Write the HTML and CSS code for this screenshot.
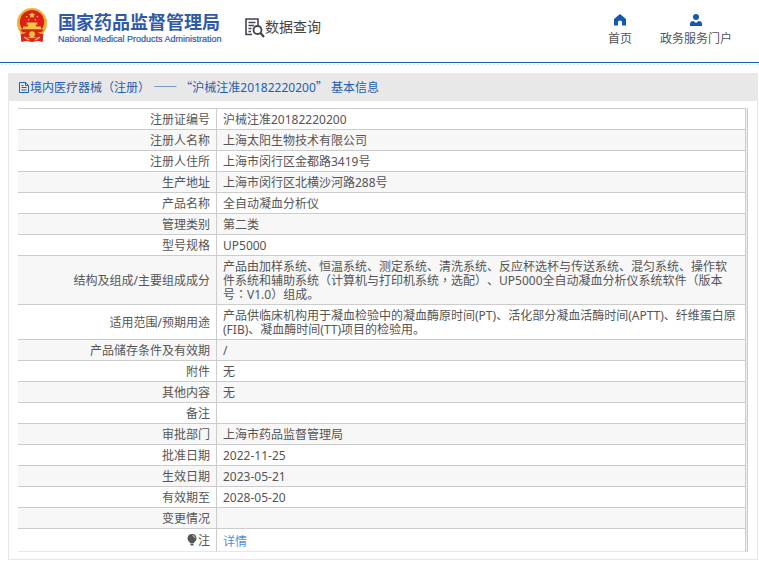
FILE: index.html
```html
<!DOCTYPE html>
<html lang="zh-CN">
<head>
<meta charset="utf-8">
<title>国家药品监督管理局 数据查询</title>
<link rel="stylesheet" href="styles.css">
</head>
<body>
<header class="site-header">
  <div class="brand">
    <svg class="emblem" viewBox="0 0 32 36" aria-hidden="true">
      <path d="M4 22L5 35L10 34L16 35L22 34L27 35L28 22Z" fill="#d8261c"/>
      <circle cx="16" cy="15.500" r="15.500" fill="#e9b53c"/>
      <circle cx="16" cy="14.500" r="12.500" fill="#dc2018"/>
      <path d="M16 4l.9 2.200 2.400.2-1.800 1.500.6 2.300-2.100-1.200-2.100 1.200.6-2.300-1.800-1.500 2.400-.2z" fill="#f5d04c"/>
      <g fill="#f5d04c"><circle cx="10.500" cy="9" r=".8"/><circle cx="12.500" cy="12" r=".8"/><circle cx="19.500" cy="12" r=".8"/><circle cx="21.500" cy="9" r=".8"/></g>
      <path d="M11 15h10l1 2h-2v2h5l1 3H6l1-3h5v-2h-2z" fill="#f0c548"/>
      <path d="M4 22h24l-2 3H6z" fill="#dc2018"/>
      <path d="M5 27L12 25L16 28L20 25L27 27L23 31L16 29L9 31Z" fill="#d8261c"/>
      <circle cx="16" cy="27" r="3" fill="#efbf45"/>
      <path d="M8 30L13 33M24 30L19 33" stroke="#efbf45" stroke-width="1.500"/>
    </svg>
    <div class="brand-text">
      <span class="brand-name">国家药品监督管理局</span>
      <span class="brand-en">National Medical Products Administration</span>
    </div>
  </div>
  <div class="section-name">
    <svg class="search-icon" viewBox="0 0 20 20" aria-hidden="true" fill="none" stroke="#444250">
      <path d="M7 16.500H1V1H13V7" stroke-width="1.600"/>
      <path d="M3.500 4.500H10.500M3.500 7.500H9M3.500 10.500H6.500M3.500 13.500H6" stroke-width="1.300"/>
      <circle cx="12.500" cy="12" r="4" stroke-width="1.800"/>
      <path d="M15.500 15L19 19" stroke-width="2.200"/>
    </svg>
    <span>数据查询</span>
  </div>
  <nav class="top-nav">
    <a href="#home"><svg viewBox="0 0 12 12" aria-hidden="true"><path d="M6 0L12 5V11.500H8V8Q8 6.500 6 6.500T4 8V11.500H0V5Z"/></svg>首页</a>
    <a href="#portal"><svg viewBox="0 0 12 12" aria-hidden="true"><circle cx="6" cy="3" r="3"/><path d="M0 12V10Q0 7 3.500 7L6 9L8.500 7Q12 7 12 10V12Z"/></svg>政务服务门户</a>
  </nav>
</header>
<main class="panel">
  <h1 class="panel-title">
    <svg viewBox="0 0 10 11" aria-hidden="true" fill="none" stroke="#1d62b8"><path d="M.5.5H6.500L9.500 3.500V10.500H.5ZM6.500.5V3.500H9.500M2.500 3.500H4.500M2.500 5.500H7.500M2.500 8H7.500"/></svg>
    <span>境内医疗器械（注册） <span class="cjk">——</span> <span class="cjk">“</span>沪械注准20182220200<span class="cjk">”</span> 基本信息</span>
  </h1>
  <div class="table-frame">
    <table class="info">
      <tbody>
        <tr><th scope="row">注册证编号</th><td>沪械注准20182220200</td></tr>
        <tr><th scope="row">注册人名称</th><td>上海太阳生物技术有限公司</td></tr>
        <tr><th scope="row">注册人住所</th><td>上海市闵行区金都路3419号</td></tr>
        <tr><th scope="row">生产地址</th><td>上海市闵行区北横沙河路288号</td></tr>
        <tr><th scope="row">产品名称</th><td>全自动凝血分析仪</td></tr>
        <tr><th scope="row">管理类别</th><td>第二类</td></tr>
        <tr><th scope="row">型号规格</th><td>UP5000</td></tr>
        <tr><th scope="row">结构及组成/主要组成成分</th><td>产品由加样系统、恒温系统、测定系统、清洗系统、反应杯选杯与传送系统、混匀系统、操作软<br>件系统和辅助系统（计算机与打印机系统<span class="centered" lang="zh-TW">，</span>选配）、UP5000全自动凝血分析仪系统软件（版本<br>号<span class="centered" lang="zh-TW">：</span>V1.0）组成。</td></tr>
        <tr><th scope="row">适用范围/预期用途</th><td>产品供临床机构用于凝血检验中的凝血酶原时间(PT)、活化部分凝血活酶时间(APTT)、纤维蛋白原<br>(FIB)、凝血酶时间(TT)项目的检验用。</td></tr>
        <tr><th scope="row">产品储存条件及有效期</th><td>/</td></tr>
        <tr><th scope="row">附件</th><td>无</td></tr>
        <tr><th scope="row">其他内容</th><td>无</td></tr>
        <tr><th scope="row">备注</th><td></td></tr>
        <tr><th scope="row">审批部门</th><td>上海市药品监督管理局</td></tr>
        <tr><th scope="row">批准日期</th><td>2022-11-25</td></tr>
        <tr><th scope="row">生效日期</th><td>2023-05-21</td></tr>
        <tr><th scope="row">有效期至</th><td>2028-05-20</td></tr>
        <tr><th scope="row">变更情况</th><td></td></tr>
        <tr class="note"><th scope="row"><svg viewBox="0 0 10 12" aria-hidden="true"><path d="M5 0C8 0 9.500 2 9.500 4.500C9.500 7 7 8 6.500 9.500H3.500C3 8 .5 7 .5 4.500C.5 2 2 0 5 0ZM3.500 10H6.500V11.500H3.500Z" fill="#555"/><path d="M5.500 1.500Q7.500 2 8 4" fill="none" stroke="#ddd"/></svg>注</th><td><a href="#detail">详情</a></td></tr>
      </tbody>
    </table>
  </div>
</main>
</body>
</html>
```
FILE: styles.css
```css
* { box-sizing: border-box; }
body {
  margin: 0;
  background: #fff;
  color: #555;
  font: 12px/14px "Noto Sans", "Noto Sans CJK SC", sans-serif;
  text-spacing-trim: space-all;
}
a { text-decoration: none; }
.site-header {
  display: flex;
  align-items: flex-start;
  height: 66px;
  padding-left: 16px;
  background:
    radial-gradient(circle, #dceaf1 1px, transparent 1px) 0 63px / 4px 3px repeat-x,
    linear-gradient(#1f61a5, #1f61a5) 0 62px / 100% 1px no-repeat;
}
.brand { display: flex; gap: 10px; padding-top: 8px; }
.emblem { width: 32px; height: 35px; }
.brand-text { display: flex; flex-direction: column; width: 162px; color: #2f5aa8; white-space: nowrap; }
.brand-name { font: bold 18px/26px "Noto Sans CJK SC", sans-serif; }
.brand-en { font: 9px/10px "Liberation Sans", sans-serif; -webkit-text-stroke: 0.2px #2f5aa8; }
.section-name {
  display: flex;
  margin-left: 25px;
  padding-top: 16px;
  color: #444;
  font: 14px/20px "Noto Sans CJK SC", sans-serif;
}
.search-icon { width: 20px; height: 20px; margin-top: 2px; }
.top-nav { display: flex; gap: 28px; margin-left: auto; padding: 14px 27px 0 0; }
.top-nav a { display: flex; flex-direction: column; align-items: center; gap: 5px; color: #555; line-height: 16px; }
.top-nav svg { width: 12px; height: 12px; fill: #1558b0; }
.panel { margin: 7px 1px 0 8px; border: 1px solid #e6e6e6; }
.panel-title {
  display: flex;
  align-items: center;
  gap: 1px;
  margin: -1px -1px 0;
  height: 28px;
  padding: 1px 0 0 11px;
  background: #e8e8e8;
  color: #1d5fb0;
  font-size: 12px;
  font-weight: normal;
}
.panel-title svg { width: 10px; height: 11px; }
.cjk { font-family: "Noto Sans CJK SC", sans-serif; }
.centered { font-family: "Noto Sans CJK TC", sans-serif; line-height: 0; }
.table-frame { margin: 7px 9px; border-right: 1px solid #ccc; padding-right: 1px; background: #f0f0f0; }
.info { width: 100%; border-collapse: separate; border-spacing: 0; border-right: 1px solid #ccc; background: #fff; }
.info th, .info td { height: 21px; border-top: 1px solid #ccc; padding: 4px 5px 2px 6px; text-align: left; vertical-align: middle; }
.info th { width: 199px; padding-right: 6px; border-right: 1px solid #ccc; text-align: right; font-weight: normal; }
.info tr:nth-child(even) { background: #f7f7f7; }
.info .note th, .info .note td { height: 24px; border-bottom: 1px solid #e8e8e8; }
.info .note td { padding-top: 5px; }
.note svg { width: 10px; height: 12px; margin-right: 1px; vertical-align: -1px; }
.note a { color: #4a90e2; }
```
